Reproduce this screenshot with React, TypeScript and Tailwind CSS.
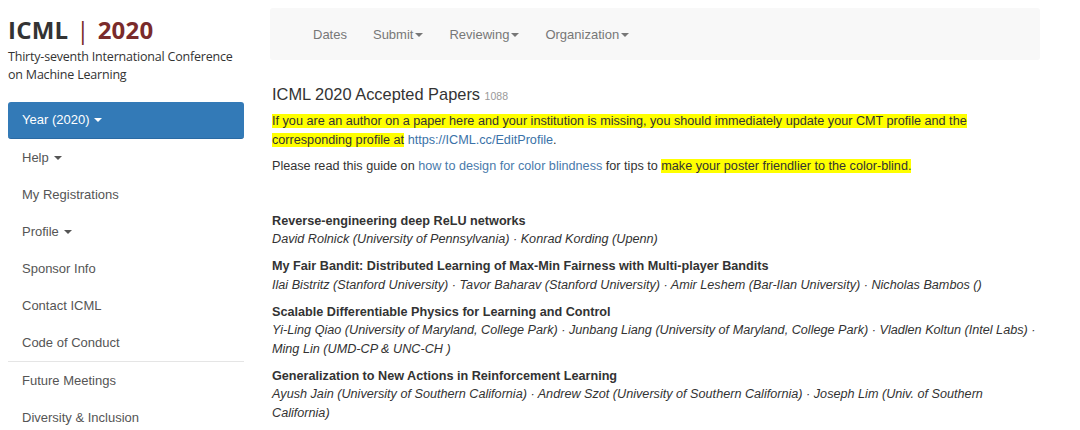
import React from 'react';

const Caret = ({ className = '' }: { className?: string }) => (
  <span className={`inline-block w-0 h-0 border-t-[4px] border-x-[4px] border-x-transparent align-middle ${className}`} />
);

const sideItems = [
  { label: 'Help', caret: true },
  { label: 'My Registrations' },
  { label: 'Profile', caret: true },
  { label: 'Sponsor Info' },
  { label: 'Contact ICML' },
  { label: 'Code of Conduct' },
];

const papers = [
  {
    title: 'Reverse-engineering deep ReLU networks',
    authors: 'David Rolnick (University of Pennsylvania) · Konrad Kording (Upenn)',
  },
  {
    title: 'My Fair Bandit: Distributed Learning of Max-Min Fairness with Multi-player Bandits',
    authors:
      'Ilai Bistritz (Stanford University) · Tavor Baharav (Stanford University) · Amir Leshem (Bar-Ilan University) · Nicholas Bambos ()',
  },
  {
    title: 'Scalable Differentiable Physics for Learning and Control',
    authors:
      'Yi-Ling Qiao (University of Maryland, College Park) · Junbang Liang (University of Maryland, College Park) · Vladlen Koltun (Intel Labs) · Ming Lin (UMD-CP & UNC-CH )',
  },
  {
    title: 'Generalization to New Actions in Reinforcement Learning',
    authors:
      'Ayush Jain (University of Southern California) · Andrew Szot (University of Southern California) · Joseph Lim (Univ. of Southern California)',
  },
];

export default function App() {
  return (
    <div className="w-[1080px] h-[430px] overflow-hidden bg-white flex pl-2 text-[13px] text-[#333]" style={{ fontFamily: '"Liberation Sans", Arial, sans-serif' }}>
      {/* Sidebar */}
      <div className="w-[236px] shrink-0">
        <div className="pt-[14px] h-[102px]" style={{ fontFamily: '"Open Sans", sans-serif' }}>
          <div className="text-[24px] font-bold leading-[32px] tracking-[0.2px]">
            <span className="text-[#333]">ICML</span>
            <span className="text-[#7a2b2b] font-normal mx-[8px]">|</span>
            <span className="text-[#7a2b2b]">2020</span>
          </div>
          <div className="text-[12.5px] leading-[18px] text-[#333] mt-[2px] tracking-[-0.2px]">
            Thirty-seventh International Conference on Machine Learning
          </div>
        </div>
        <div className="h-[37px] bg-[#337ab7] rounded-[3px] text-white flex items-center pl-[14px] gap-[5px] border-b border-[#2a6aa3]">
          Year (2020) <Caret className="border-t-white" />
        </div>
        {sideItems.map((it) => (
          <div key={it.label} className="h-[37px] flex items-center pl-[14px] gap-[5px] text-[#555]">
            {it.label} {it.caret && <Caret className="border-t-[#555]" />}
          </div>
        ))}
        <div className="h-px bg-[#e5e5e5]" />
        <div className="h-[37px] flex items-center pl-[14px] text-[#555]">Future Meetings</div>
        <div className="h-[37px] flex items-center pl-[14px] text-[#555]">Diversity &amp; Inclusion</div>
      </div>

      {/* Main */}
      <div className="ml-[26px] w-[770px] shrink-0">
        <div className="mt-2 h-[52px] bg-[#f8f8f8] rounded-[3px] flex items-center pl-[30px] text-[#777]">
          <div className="px-[13px] pt-px">Dates</div>
          <div className="px-[13px] pt-px flex items-center gap-[2px]">Submit <Caret className="border-t-[#777]" /></div>
          <div className="px-[13px] pt-px flex items-center gap-[2px]">Reviewing <Caret className="border-t-[#777]" /></div>
          <div className="px-[13px] pt-px flex items-center gap-[2px]">Organization <Caret className="border-t-[#777]" /></div>
        </div>

        <div className="ml-[2px] w-[768px] text-[12.65px]">
          <h3 className="mt-[24px] mb-[7px] text-[16.4px] leading-[20px] text-[#333]">
            ICML 2020 Accepted Papers <span className="text-[10.5px] text-[#999]">1088</span>
          </h3>
          <p className="leading-[18.5px] mb-2 -mt-px">
            <span className="bg-[#ffff00]">
              If you are an author on a paper here and your institution is missing, you should immediately update your CMT profile and the corresponding profile at
            </span>{' '}
            <span className="text-[#3a72a8]">https://ICML.cc/EditProfile</span>.
          </p>
          <p className="leading-[18.5px]">
            Please read this guide on <span className="text-[#4a7aab]">how to design for color blindness</span> for tips to{' '}
            <span className="bg-[#ffff00]">make your poster friendlier to the color-blind.</span>
          </p>

          <div className="mt-[36px]">
            {papers.map((p) => (
              <div key={p.title} className="mb-[8.5px] leading-[18.5px]">
                <div className="font-bold">{p.title}</div>
                <div className="italic">{p.authors}</div>
              </div>
            ))}
          </div>
        </div>
      </div>
    </div>
  );
}
